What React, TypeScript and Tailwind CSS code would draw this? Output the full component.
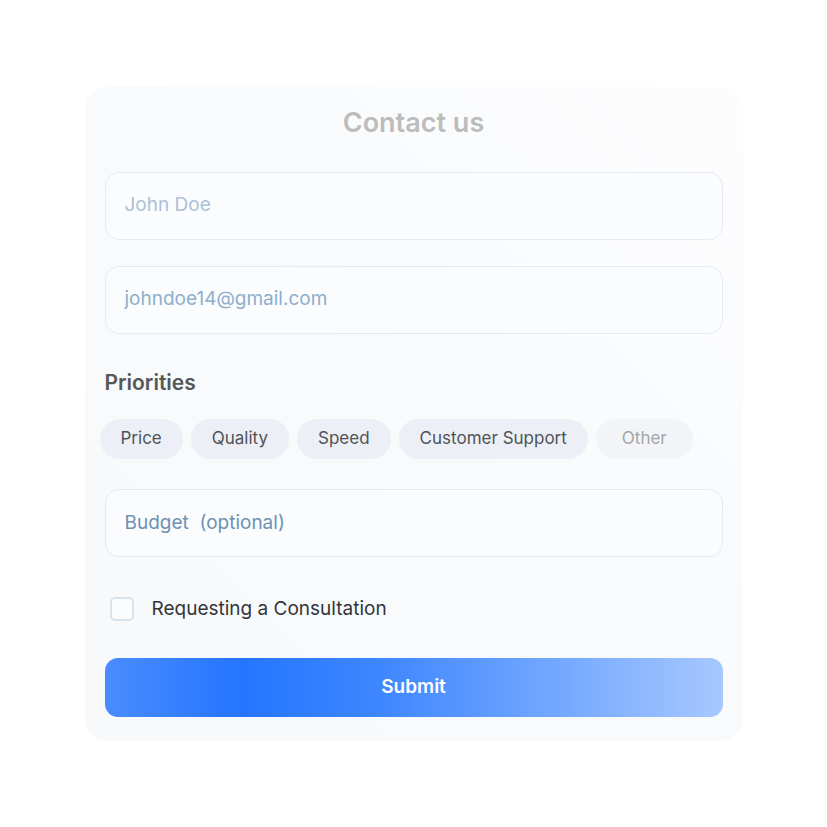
const priorities = [
  { label: "Price", muted: false },
  { label: "Quality", muted: false },
  { label: "Speed", muted: false },
  { label: "Customer Support", muted: false },
  { label: "Other", muted: true },
];

function Field({ text, color }: { text: string; color: string }) {
  return (
    <div className="flex h-[68px] items-center rounded-[14px] border border-[#e6ebf1] bg-[#fafcfe] px-[19px]">
      <span className="whitespace-pre text-[19px]" style={{ color }}>
        {text}
      </span>
    </div>
  );
}

export default function App() {
  return (
    <div
      className="flex min-h-[827px] w-[827px] items-start justify-center bg-white pt-[87px]"
      style={{ fontFamily: "Inter, 'Noto Sans', sans-serif" }}
    >
      <div className="w-[658px] rounded-[22px] bg-gradient-to-bl from-[#fdfdfe] via-[#f8fafc] to-[#f7f9fb] px-5 pb-6 pt-4">
        <h1 className="text-center text-[27px] font-semibold text-[#bcbcbc]">Contact us</h1>

        <div className="mt-[28px] flex flex-col gap-[26px]">
          <Field text="John Doe" color="#abc1d7" />
          <Field text="johndoe14@gmail.com" color="#8eaecb" />
        </div>

        <h2 className="mt-[33px] text-[21px] font-semibold text-[#575757]">Priorities</h2>

        <div className="-ml-[5px] mt-[21px] flex gap-2">
          {priorities.map((p) => (
            <span
              key={p.label}
              className={
                p.muted
                  ? "flex h-10 items-center rounded-full bg-[#f2f4f7] px-[26px] text-[17px] text-[#a3a6ab]"
                  : "flex h-10 items-center rounded-full bg-[#eceff5] px-[21px] text-[17px] text-[#4f5358]"
              }
            >
              {p.label}
            </span>
          ))}
        </div>

        <div className="mt-[30px]">
          <Field text="Budget  (optional)" color="#6f90b1" />
        </div>

        <label className="ml-[5px] mt-[38px] flex items-center gap-[18px]">
          <span className="h-6 w-6 rounded-[5px] border-2 border-[#d9e3ec] bg-[#fafcfe]" />
          <span className="text-[19px] text-[#333539]">Requesting a Consultation</span>
        </label>

        <button
          className="mt-[34px] flex h-[59px] w-full items-center justify-center rounded-[13px] text-[19px] font-semibold text-white"
          style={{
            background:
              "linear-gradient(90deg, #4a8cff 0%, #2575ff 22%, #3f87ff 45%, #6aa2ff 68%, #8ab6ff 85%, #a6c8ff 100%)",
          }}
        >
          Submit
        </button>
      </div>
    </div>
  );
}
